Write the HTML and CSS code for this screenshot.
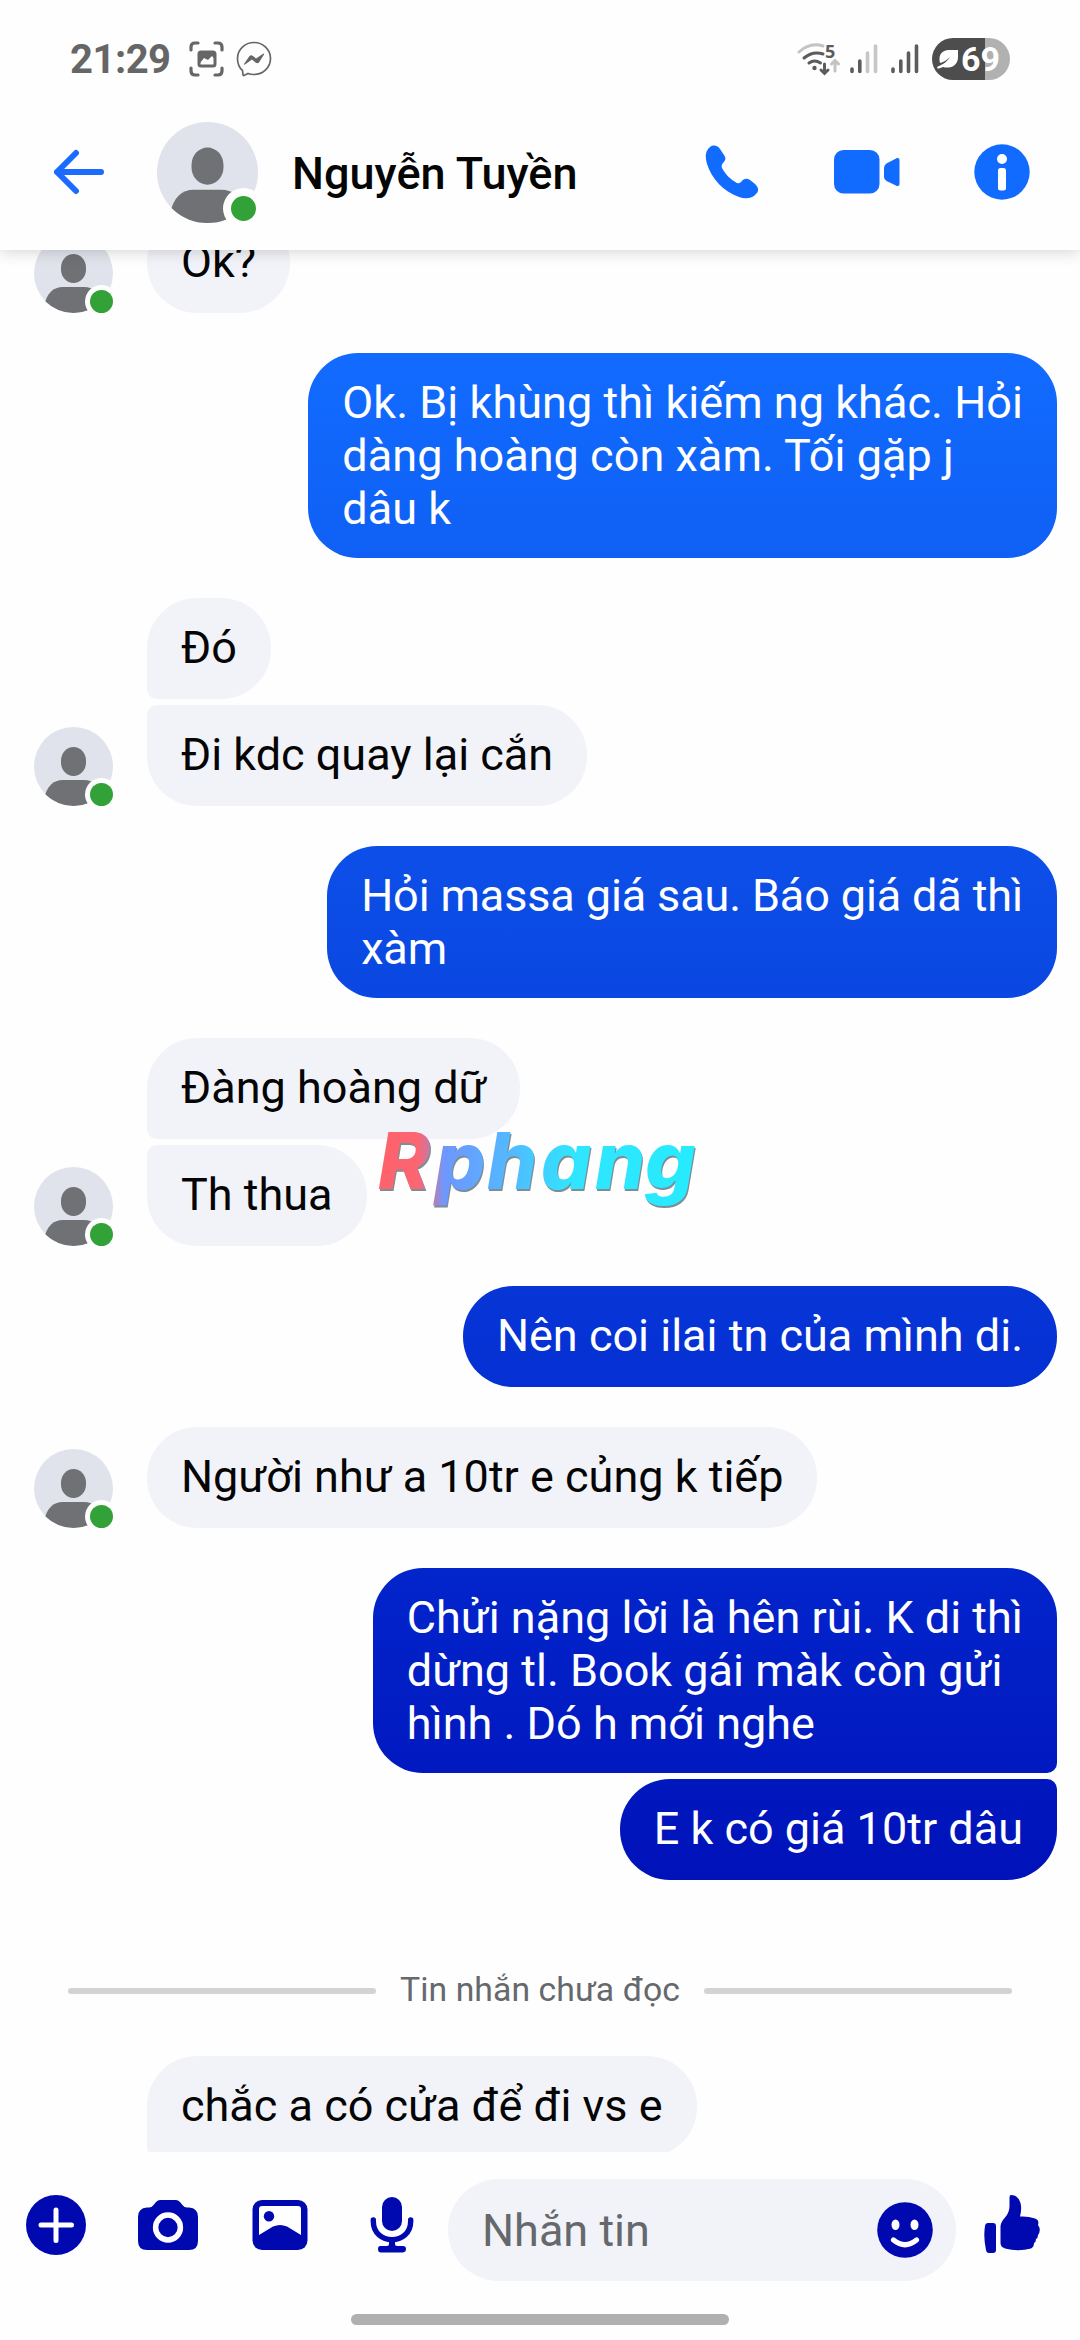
FILE: index.html
```html
<!DOCTYPE html>
<html lang="vi">
<head>
<meta charset="utf-8">
<title>Nguyễn Tuyền</title>
<link rel="stylesheet" href="styles.css">
</head>
<body>
<svg class="defs" aria-hidden="true">
  <symbol id="person" viewBox="0 0 79 79">
    <clipPath id="round"><circle cx="39.5" cy="39.5" r="39.5"/></clipPath>
    <circle cx="39.5" cy="39.5" r="39.5" fill="#e0e3eb"/>
    <g clip-path="url(#round)" fill="#707175">
      <rect x="27" y="20" width="25" height="29" rx="12.5" ry="13.5"/>
      <path d="M10 80V72C13 59 19 53 29 53H50C60 53 66 59 69 72V80Z"/>
    </g>
  </symbol>
</svg>
<div class="phone">
  <header class="top">
    <div class="status">
      <span class="clock">21:29</span>
      <svg class="shot" width="36" height="36" viewBox="0 0 36 36" fill="none" stroke="#666" stroke-width="3.200" stroke-linecap="round">
        <path d="M2 9V6Q2 2 6 2H9M26 2H29Q33 2 33 6V9M33 27V30Q33 34 29 34H26M9 34H6Q2 34 2 30V27"/>
        <rect x="10" y="11" width="16" height="14" rx="2" stroke-width="3"/>
        <path d="M9 11H27V20L23 15L19 19L15 17L11 22L9 23Z" fill="#666" stroke="none"/>
      </svg>
      <svg class="msgr" width="36" height="36" viewBox="0 0 36 36">
        <path d="M18 1.500C27 1.500 34.500 8.500 34.500 17.500S27 33.500 18 33.500Q14 33.500 12 32.500L8 34.500Q7 34.700 7 33.500L6.500 29.500C3 26.500 1.500 22.500 1.500 17.500C1.500 8.500 9 1.500 18 1.500Z" fill="none" stroke="#666" stroke-width="1.700"/>
        <path d="M8 23L13.500 15Q15 13.500 17 15L20 17.500L27.500 12.500Q28.500 12.500 28 13.500L23 21.500Q21.500 23 19.500 21.500L16 18.500L9 23.500Q8 24 8 23Z" fill="#666"/>
      </svg>
      <span class="spacer"></span>
      <svg class="wifi" width="46" height="34" viewBox="0 0 46 34" fill="none" stroke="#5c5c5c" stroke-width="3" stroke-linecap="round">
        <path d="M2 10Q13 0 26 4" stroke="#c3c3c3"/>
        <path d="M7 16Q16 8.500 26 12"/>
        <path d="M12 21Q17.500 17 23.500 21"/>
        <circle cx="17.500" cy="26" r="2.200" fill="#5c5c5c" stroke="none"/>
        <path d="M27.500 22V31M24 28L27.500 31.500L31 28"/>
        <path d="M38 29V20M34.500 22L38 18.500L41.500 22" stroke="#c3c3c3"/>
        <text x="28" y="16" class="five">5</text>
      </svg>
      <svg class="sim1" width="28" height="30" viewBox="0 0 28 30" stroke-width="3.600" stroke-linecap="round">
        <path d="M2 25V27.500M9.800 17V27.500" stroke="#5c5c5c"/>
        <path d="M17.500 9V27.500M25.500 2V27.500" stroke="#c6c6c6"/>
      </svg>
      <svg class="sim2" width="28" height="30" viewBox="0 0 28 30" stroke="#5c5c5c" stroke-width="3.600" stroke-linecap="round">
        <path d="M2 25V27.500M9.800 17V27.500M17.500 9V27.500M25.500 2V27.500"/>
      </svg>
      <span class="battery">
        <svg width="22" height="20" viewBox="0 0 22 20">
          <path d="M3 14C1 6 5 1 12 1H21V8C21 17 13 20 6 18L2 19.500Q0 20 0 18L4 16Q10 13 13 8Q8 13 3 14Z" fill="#fff"/>
        </svg>
        <b>69</b>
      </span>
    </div>
    <div class="bar">
      <svg class="back" width="52" height="48" viewBox="0 0 52 48" fill="none" stroke="#1b6bff" stroke-width="6" stroke-linecap="round" stroke-linejoin="round">
        <path d="M48 24H4M23 5L4 24L23 43"/>
      </svg>
      <div class="face big"><svg><use href="#person"/></svg><i></i></div>
      <h1>Nguyễn Tuyền</h1>
      <svg class="call" width="54" height="54" viewBox="0 0 54 54" fill="#126bff">
        <path d="M5 2C9-1 13 1 15 4L19 10C21 13 21 15 18 18Q16 20 17 23C21 30 25 34 32 38Q34 39 36 37C39 33 42 33 45 35L50 39C54 43 54 46 51 49C47 54 40 54 34 52C18 46 7 34 2 19C0 12 0 6 5 2Z"/>
      </svg>
      <svg class="video" width="66" height="44" viewBox="0 0 66 44" fill="#126bff">
        <rect width="45.500" height="43.500" rx="9.500"/>
        <path d="M50 18Q50 15 52.500 13.500L63 8Q65.500 7.500 65.500 10V34Q65.500 36.500 63 36L52.500 31Q50 29.500 50 27Z"/>
      </svg>
      <svg class="info" width="56" height="56" viewBox="0 0 56 56">
        <circle cx="28" cy="28" r="27.700" fill="#126bff"/>
        <circle cx="28" cy="15" r="5" fill="#fff"/>
        <rect x="24" y="24" width="8" height="22.500" rx="2.500" fill="#fff"/>
      </svg>
    </div>
  </header>

  <main class="chat">
    <div class="in"><div class="face"><svg><use href="#person"/></svg><i></i></div>
      <div class="stack"><p>Ok?</p></div></div>
    <div class="out"><p class="loose">Ok. Bị khùng thì kiếm ng khác. Hỏi<br>dàng hoàng còn xàm. Tối gặp j<br>dâu k</p></div>
    <div class="in"><div class="face"><svg><use href="#person"/></svg><i></i></div>
      <div class="stack"><p>Đó</p><p>Đi kdc quay lại cắn</p></div></div>
    <div class="out"><p class="tight">Hỏi massa giá sau. Báo giá dã thì<br>xàm</p></div>
    <div class="in"><div class="face"><svg><use href="#person"/></svg><i></i></div>
      <div class="stack"><p>Đàng hoàng dữ</p><p>Th thua</p></div></div>
    <div class="out"><p>Nên coi ilai tn của mình di.</p></div>
    <div class="in"><div class="face"><svg><use href="#person"/></svg><i></i></div>
      <div class="stack"><p>Người như a 10tr e củng k tiếp</p></div></div>
    <div class="out"><p>Chửi nặng lời là hên rùi. K di thì<br>dừng tl. Book gái màk còn gửi<br>hình . Dó h mới nghe</p><p>E k có giá 10tr dâu</p></div>
    <div class="unread"><span>Tin nhắn chưa đọc</span></div>
    <div class="in last"><div class="stack"><p class="more">chắc a có cửa để đi vs e</p></div></div>
  </main>

  <footer class="composer">
    <svg width="60" height="60" viewBox="0 0 60 60">
      <circle cx="30" cy="30" r="30" fill="#0008b0"/>
      <path d="M30 15V45.500M15 30H45.500" stroke="#fff" stroke-width="5" stroke-linecap="round"/>
    </svg>
    <svg width="60" height="60" viewBox="0 0 60 60">
      <path d="M9 12.500H11Q14 12.500 16 9.500L18 7Q20 5 22 5H38Q40 5 42 7L44 9.500Q46 12.500 49 12.500H51Q60 13 60 22V46Q60 55 51 55H9Q0 55 0 46V22Q0 13 9 12.500Z" fill="#0008b0"/>
      <circle cx="30" cy="32.500" r="12.400" fill="none" stroke="#fff" stroke-width="5.500"/>
    </svg>
    <svg width="60" height="60" viewBox="0 0 60 60">
      <rect x="2.500" y="5" width="55" height="50" rx="9.500" fill="#0008b0"/>
      <path d="M9 40V14Q9 11 12 11H48Q51 11 51 14V40L37 31.500Q30 28.500 23 31.500Z" fill="#fff"/>
      <circle cx="19" cy="21.300" r="5.200" fill="#0008b0"/>
    </svg>
    <svg width="60" height="60" viewBox="0 0 60 60" fill="#0008b0">
      <rect x="20" y="2" width="20" height="34" rx="10"/>
      <path d="M11.300 25V26C11.300 51 48.700 51 48.700 26V25" fill="none" stroke="#0008b0" stroke-width="5.400" stroke-linecap="round"/>
      <path d="M27 44H33V49Q33 51 35 51H41Q44 51 44 54T41 57.500H19Q16 57.500 16 54T19 51H25Q27 51 27 49Z"/>
    </svg>
    <div class="field">
      <span>Nhắn tin</span>
      <svg width="56" height="56" viewBox="0 0 56 56">
        <circle cx="28" cy="28" r="27.800" fill="#0008b0"/>
        <ellipse cx="18.500" cy="22.700" rx="4" ry="5.300" fill="#fff"/><ellipse cx="37.500" cy="22.700" rx="4" ry="5.300" fill="#fff"/>
        <path d="M16.500 38Q28 47.500 39.500 38" fill="none" stroke="#fff" stroke-width="5.200" stroke-linecap="round"/>
      </svg>
    </div>
    <svg class="like" width="56" height="60" viewBox="0 0 56 60" fill="#0008b0">
      <path d="M4 28H9Q12 28 12 31V55Q12 58 9 58H5Q2.500 58 2 55Q-.8 42 1 31Q1.500 28 4 28Z"/>
      <path d="M27 0Q34 0 36.500 8Q38 14 36 21.500Q44 21 51 23.500Q55.500 25 54 30Q57.500 35 54 40Q54 43 52 44Q52 47 50 48Q50 52 47 53.500Q34 57 21 53.500Q16.500 52 16.500 48V31Q17 27 21 22.500Q26 17 25.500 9V3Q25.500 0 27 0Z"/>
    </svg>
  </footer>
  <div class="homebar"></div>

  <svg class="mark" width="350" height="100" viewBox="0 0 350 100">
    <linearGradient id="hue" gradientUnits="userSpaceOnUse" x1="10" y1="0" x2="330" y2="0">
      <stop offset="0" stop-color="#ff626b"/><stop offset=".12" stop-color="#fb6672"/><stop offset=".18" stop-color="#a086cc"/><stop offset=".2" stop-color="#6e98ff"/>
      <stop offset=".25" stop-color="#689dff"/><stop offset=".42" stop-color="#50bcff"/><stop offset=".6" stop-color="#30e5ff"/><stop offset="1" stop-color="#26ebff"/>
    </linearGradient>
    <text x="8 65 117 171 225 275" y="69" fill="url(#hue)">Rphang</text>
  </svg>
</div>
</body>
</html>
```
FILE: styles.css
```css
* { box-sizing: border-box; }
body { margin: 0; background: #fefefe; font-family: Roboto, "Noto Sans", sans-serif; color: #050505; }
svg { display: block; flex: none; }
.defs { position: absolute; width: 0; height: 0; }
.phone { position: relative; width: 1080px; height: 2340px; overflow: hidden; display: flex; flex-direction: column; }

/* status bar and conversation header */
.top { height: 250px; flex: none; background: #fefefe; z-index: 1; box-shadow: 0 2px 14px rgba(0,0,0,.17); }
.status { height: 118px; display: flex; align-items: center; padding: 0 70px; }
.clock { width: 119px; font-size: 40px; font-weight: 700; color: #666; letter-spacing: -.5px; }
.msgr { margin-left: 11px; }
.spacer { flex: 1; }
.wifi { margin-right: 7px; overflow: visible; }
.five { font: 700 18px "Open Sans", sans-serif; fill: #5c5c5c; stroke: none; }
.sim2 { margin: 0 13px; }
.battery { width: 78px; height: 42px; border-radius: 21px; display: flex; align-items: center; gap: 2px; padding-left: 5px; color: #fff; background: linear-gradient(90deg, #4d4d4d 53px, #b1b1b1 53px); }
.battery b { font: 700 34px/42px Roboto, sans-serif; }
.bar { height: 108px; display: flex; align-items: center; padding: 0 50px 0 53px; }
.face { position: relative; width: 79px; height: 79px; flex: none; }
.face svg { width: 100%; height: 100%; }
.face i { position: absolute; right: 0; bottom: 0; width: 23px; height: 23px; border-radius: 50%; background: #31a138; box-shadow: 0 0 0 5px #fefefe; }
.face.big { width: 101px; height: 101px; margin-left: 52px; }
.face.big i { width: 25px; height: 25px; right: 2px; bottom: 2px; box-shadow: 0 0 0 8px #fefefe; }
h1 { margin: 0 auto 0 34px; padding-top: 3px; font-size: 45px; font-weight: 500; line-height: 54px; letter-spacing: .05px; white-space: nowrap; }
.video { margin: 0 74px 0 75px; }

/* conversation */
.chat { height: 1902px; flex: none; overflow: hidden; display: flex; flex-direction: column; gap: 40px; padding: 0 23px 0 34px; }
.chat > :first-child { margin-top: -38px; }
.in { display: flex; align-items: flex-end; gap: 34px; flex: none; }
.last { padding-left: 113px; }
.stack, .out { display: flex; flex-direction: column; gap: 6px; align-items: flex-start; flex: none; }
.out { align-items: flex-end; }
p { margin: 0; min-height: 101px; padding: 23px 34px; border-radius: 50px; font-size: 45px; line-height: 53px; background: #f2f3f8; white-space: nowrap; }
.out p { color: #fff; background: linear-gradient(#126cff 340px, #0b49e3 960px, #0325cc 1568px, #0011b8 1890px) fixed; }
.loose { letter-spacing: .04px; }
.out .tight { letter-spacing: -.13px; }
.stack p:not(:last-child), .more { border-bottom-left-radius: 10px; }
.stack p:not(:first-child) { border-top-left-radius: 10px; }
.out p:not(:last-child) { border-bottom-right-radius: 10px; }
.out p:not(:first-child) { border-top-right-radius: 10px; }
.unread { height: 96px; flex: none; display: flex; align-items: center; gap: 24px; padding: 45px 45px 0 34px; font-size: 33.750px; line-height: 40px; letter-spacing: .06px; color: #65686c; white-space: nowrap; }
.unread span { padding-bottom: 2px; }
.unread::before, .unread::after { content: ""; flex: 1; height: 6px; border-radius: 3px; background: #d1d3d5; }

/* message composer */
.composer { height: 156px; flex: none; display: flex; align-items: center; gap: 52px; padding: 0 40px 10px 26px; }
.field { width: 508px; height: 102px; margin: 10px -24px 0 -26px; border-radius: 51px; background: #f2f3f8; display: flex; align-items: center; justify-content: space-between; padding: 0 23px 0 34px; font-size: 45px; color: #65686c; }
.homebar { width: 378px; height: 11px; margin: 6px auto 0; border-radius: 6px; background: #b0b0b0; }

/* watermark floating over the conversation */
.mark { position: absolute; left: 370px; top: 1120px; z-index: 2; overflow: visible; filter: drop-shadow(1px 2px 0 #7d8d96); }
.mark text { font: italic 800 79px Inter, sans-serif; }
```
